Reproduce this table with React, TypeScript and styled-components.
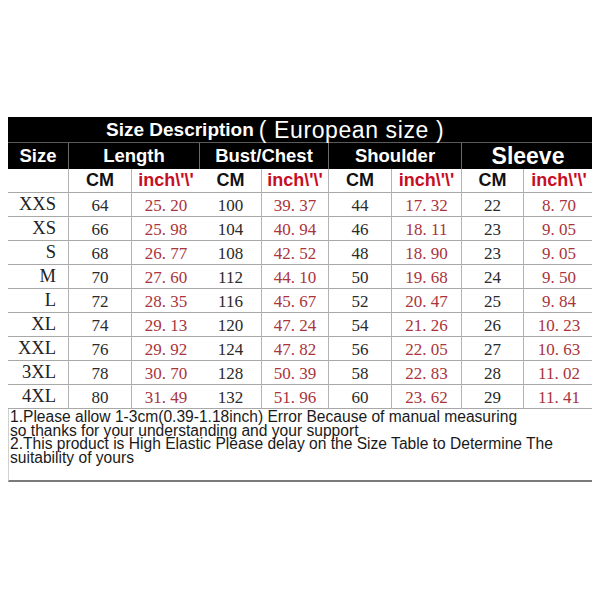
import React from 'react';
import styled, { createGlobalStyle } from 'styled-components';

const Global = createGlobalStyle`
  body {
    margin: 8px;
    background: #fff;
    font-family: 'Liberation Sans', Arial, sans-serif;
  }
`;

const Sheet = styled.div`
  width: 587px;
  margin-top: 109px;
`;

const Grid = styled.div`
  display: grid;
  grid-template-columns: 61px 63px 68px 62px 67px 63px 70px 62px 71px;
  border-right: 2px solid #8a8a8a;
`;

const TitleRow = styled.div`
  grid-column: 1 / -1;
  height: 26px;
  background: #000;
  color: #fff;
  display: flex;
  align-items: center;
  padding-left: 98px;
  border-bottom: 1px solid #5a5a5a;
  box-sizing: border-box;
`;

const TitleBold = styled.span`
  font-weight: 700;
  font-size: 19px;
`;

const TitleLight = styled.span`
  font-size: 23px;
  margin-left: 5px;
  letter-spacing: 0.6px;
  position: relative;
  top: 1px;
`;

const HeadCell = styled.div<{ $span: number; $big?: boolean }>`
  grid-column: span ${p => p.$span};
  height: 26px;
  box-sizing: border-box;
  background: #000;
  color: #fff;
  font-weight: 700;
  font-size: ${p => (p.$big ? '23px' : '18.5px')};
  display: flex;
  align-items: center;
  justify-content: center;
  border-right: 1px solid #6a6a6a;
  &:last-child {
    border-right: none;
  }
`;

const UnitCell = styled.div<{ $red?: boolean }>`
  height: 24px;
  box-sizing: border-box;
  border-right: 1px solid #b4b4b4;
  border-bottom: 1px solid #a8a8a8;
  display: flex;
  align-items: center;
  justify-content: center;
  font-weight: 700;
  font-size: 18px;
  color: ${p => (p.$red ? '#c70d23' : '#111')};
  &:nth-child(9n) {
    border-right: none;
  }
`;

const SizeCell = styled.div`
  height: 24px;
  box-sizing: border-box;
  border-right: 1px solid #b4b4b4;
  border-bottom: 1px solid #a8a8a8;
  display: flex;
  align-items: center;
  justify-content: flex-end;
  padding-right: 12px;
  font-family: 'Liberation Serif', 'Times New Roman', serif;
  font-size: 18.5px;
  color: #222;
`;

const NumCell = styled.div<{ $red?: boolean }>`
  height: 24px;
  box-sizing: border-box;
  border-right: 1px solid #b4b4b4;
  border-bottom: 1px solid #a8a8a8;
  display: flex;
  align-items: center;
  justify-content: center;
  font-family: 'Liberation Serif', 'Times New Roman', serif;
  font-size: 17px;
  padding-top: 2px;
  color: ${p => (p.$red ? '#a9343c' : '#2a2a2a')};
  &:nth-child(9n) {
    border-right: none;
  }
`;

const Notes = styled.div`
  width: 586px;
  height: 73px;
  box-sizing: border-box;
  border-left: 1px solid #d0d0d0;
  border-right: 2px solid #8a8a8a;
  border-bottom: 2px solid #7a7a7a;
  padding: 1px 0 0 1px;
  font-size: 15.6px;
  line-height: 13.5px;
  color: #1a1a1a;
`;

const NoteLine = styled.div`
  white-space: nowrap;
`;

const heads: Array<[string, number, boolean?]> = [
  ['Size', 1],
  ['Length', 2],
  ['Bust/Chest', 2],
  ['Shoulder', 2],
  ['Sleeve', 2, true],
];

const rows: string[][] = [
  ['XXS', '64', '25. 20', '100', '39. 37', '44', '17. 32', '22', '8. 70'],
  ['XS', '66', '25. 98', '104', '40. 94', '46', '18. 11', '23', '9. 05'],
  ['S', '68', '26. 77', '108', '42. 52', '48', '18. 90', '23', '9. 05'],
  ['M', '70', '27. 60', '112', '44. 10', '50', '19. 68', '24', '9. 50'],
  ['L', '72', '28. 35', '116', '45. 67', '52', '20. 47', '25', '9. 84'],
  ['XL', '74', '29. 13', '120', '47. 24', '54', '21. 26', '26', '10. 23'],
  ['XXL', '76', '29. 92', '124', '47. 82', '56', '22. 05', '27', '10. 63'],
  ['3XL', '78', '30. 70', '128', '50. 39', '58', '22. 83', '28', '11. 02'],
  ['4XL', '80', '31. 49', '132', '51. 96', '60', '23. 62', '29', '11. 41'],
];

const inch = "inch\\'\\'";

const App: React.FC = () => {
  return (
    <>
      <Global />
      <Sheet>
        <Grid>
          <TitleRow>
            <TitleBold>Size Description</TitleBold>
            <TitleLight>( European size )</TitleLight>
          </TitleRow>
          {heads.map(([label, span, big]) => (
            <HeadCell key={label} $span={span} $big={big}>
              {label}
            </HeadCell>
          ))}
          <UnitCell />
          {[0, 1, 2, 3].map(i => (
            <React.Fragment key={i}>
              <UnitCell>CM</UnitCell>
              <UnitCell $red>{inch}</UnitCell>
            </React.Fragment>
          ))}
          {rows.map(row => (
            <React.Fragment key={row[0]}>
              <SizeCell>{row[0]}</SizeCell>
              {row.slice(1).map((v, i) => (
                <NumCell key={i} $red={i % 2 === 1}>
                  {v}
                </NumCell>
              ))}
            </React.Fragment>
          ))}
        </Grid>
        <Notes>
          <NoteLine>1.Please allow 1-3cm(0.39-1.18inch) Error Because of manual measuring</NoteLine>
          <NoteLine>so thanks for your understanding and your support</NoteLine>
          <NoteLine>2.This product is High Elastic Please delay on the Size Table to Determine The</NoteLine>
          <NoteLine>suitability of yours</NoteLine>
        </Notes>
      </Sheet>
    </>
  );
};

export default App;
